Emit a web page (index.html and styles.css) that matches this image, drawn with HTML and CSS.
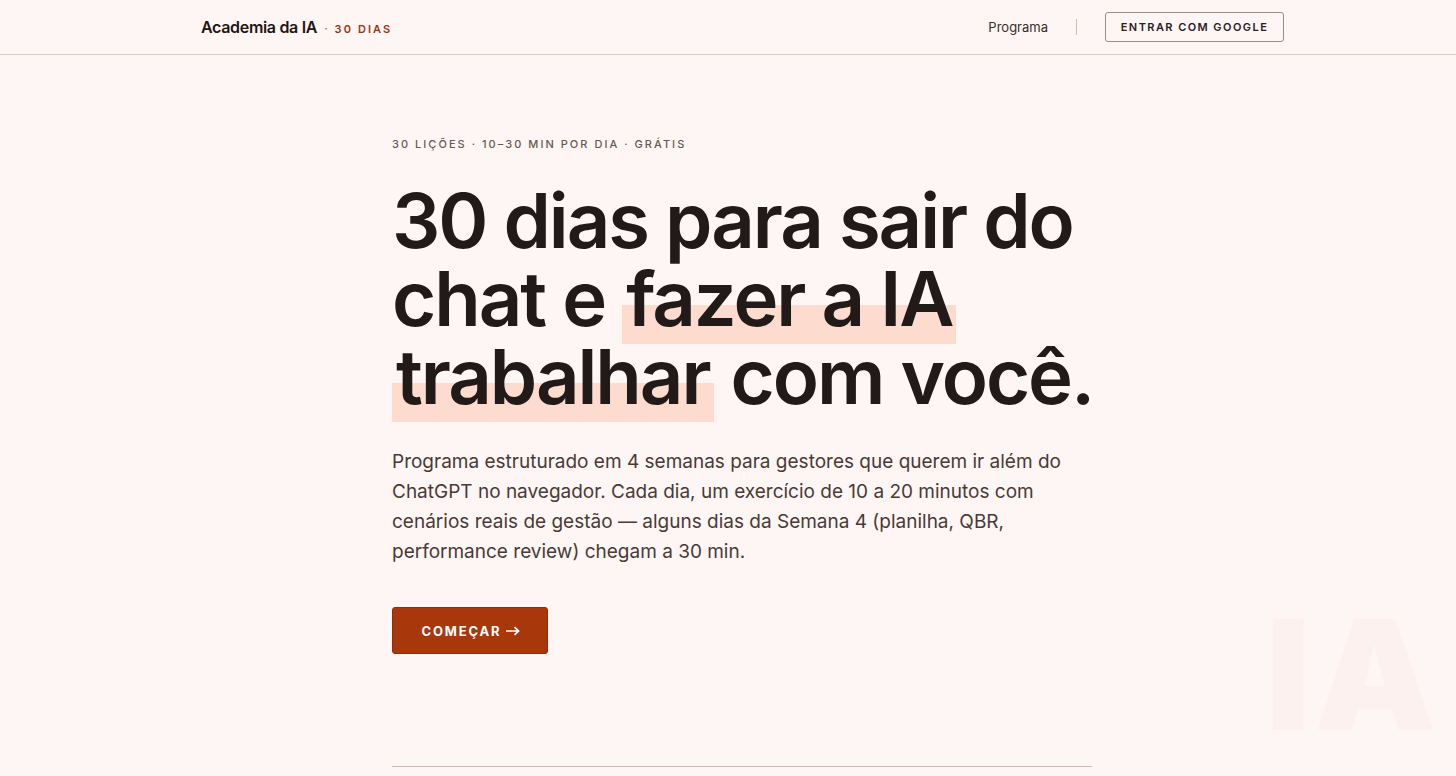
FILE: index.html
```html
<!DOCTYPE html>
<html lang="pt-BR">
<head>
<meta charset="utf-8">
<title>Academia da IA · 30 dias</title>
<link rel="stylesheet" href="styles.css">
</head>
<body>
<header class="topbar">
  <div class="topbar-inner">
    <div class="brand">
      <span class="brand-name">Academia da IA</span>
      <span class="brand-sep">·</span>
      <span class="brand-tag">30 DIAS</span>
    </div>
    <nav class="nav">
      <a class="nav-link" href="#">Programa</a>
      <span class="nav-divider"></span>
      <a class="btn-outline" href="#">ENTRAR COM GOOGLE</a>
    </nav>
  </div>
</header>
<main class="hero">
  <div class="hero-inner">
    <p class="eyebrow">30 LIÇÕES · 10–30 MIN POR DIA · GRÁTIS</p>
    <h1 class="headline">30 dias para sair do chat e <span class="mark">fazer a IA trabalhar</span> com você.</h1>
    <p class="lead">Programa estruturado em 4 semanas para gestores que querem ir além do ChatGPT no navegador. Cada dia, um exercício de 10 a 20 minutos com cenários reais de gestão — alguns dias da Semana 4 (planilha, QBR, performance review) chegam a 30 min.</p>
    <a class="btn-primary" href="#">COMEÇAR<svg class="arrow" width="14" height="10" viewBox="0 0 14 10" aria-hidden="true"><path d="M0 5H12.5M8.5 1.2L12.6 5L8.5 8.8" fill="none" stroke="#fff" stroke-width="1.7"/></svg></a>
    <hr class="rule">
  </div>
  <div class="watermark" aria-hidden="true">IA</div>
</main>
</body>
</html>
```
FILE: styles.css
```css
* { box-sizing: border-box; }
html, body { margin: 0; padding: 0; }
body {
  background: #fdf6f4;
  font-family: Inter, "Noto Sans", sans-serif;
  color: #221a18;
  overflow: hidden;
  height: 776px;
}
a { text-decoration: none; color: inherit; }

.topbar {
  height: 55px;
  border-bottom: 1px solid #d9ccc8;
}
.topbar-inner {
  margin-left: 201px;
  width: 1083px;
  height: 100%;
  display: flex;
  align-items: center;
  justify-content: space-between;
}
.brand { display: flex; align-items: baseline; gap: 7px; }
.brand-name { font-size: 16px; font-weight: 600; letter-spacing: -0.02em; color: #1e1614; }
.brand-sep { font-size: 12px; color: #8c6a5f; }
.brand-tag { font-size: 11px; font-weight: 600; letter-spacing: 0.19em; color: #9b3612; }

.nav { display: flex; align-items: center; }
.nav-link { font-size: 13px; color: #3a2d2a; }
.nav-divider { width: 1px; height: 16px; background: #cbbcb7; margin: 0 28px; }
.btn-outline {
  display: inline-flex; align-items: center; justify-content: center;
  width: 179px; height: 30px;
  border: 1px solid #9c8c88; border-radius: 3px;
  font-size: 11px; font-weight: 600; letter-spacing: 0.13em; color: #2a201e;
}

.hero { position: relative; }
.hero-inner {
  margin-left: 392px;
  width: 700px;
  padding-top: 82px;
}
.eyebrow {
  margin: 0;
  font-size: 11px; font-weight: 500; letter-spacing: 0.185em;
  color: #6b5853;
}
.headline {
  margin: 30px 0 0;
  width: 740px;
  font-size: 76px; line-height: 78px; font-weight: 600;
  letter-spacing: -0.027em;
  color: #221a18;
}
.mark {
  background: linear-gradient(to bottom, transparent 58%, #fddbce 58%, #fddbce 100%);
  padding: 0 4px;
  -webkit-box-decoration-break: clone;
  box-decoration-break: clone;
}
.lead {
  margin: 32px 0 0;
  font-size: 19px; line-height: 30px;
  color: #4a3a36;
}
.btn-primary {
  display: inline-flex; align-items: center; justify-content: center; gap: 5px;
  margin-top: 40px;
  width: 156px; height: 47px;
  padding-left: 2px;
  background: #a8380c; border: 1px solid #8e2e08; border-radius: 3px;
  color: #fff; font-size: 13px; font-weight: 700; letter-spacing: 0.14em;
}
.arrow { display: block; }
.rule {
  margin: 112px 0 0;
  border: 0; border-top: 1px solid #c9b8b3;
}
.watermark {
  position: absolute;
  left: 1266px; top: 543px;
  font-size: 153px; font-weight: 900; line-height: 1;
  color: #fcf1ee;
  letter-spacing: 4px;
}
```
